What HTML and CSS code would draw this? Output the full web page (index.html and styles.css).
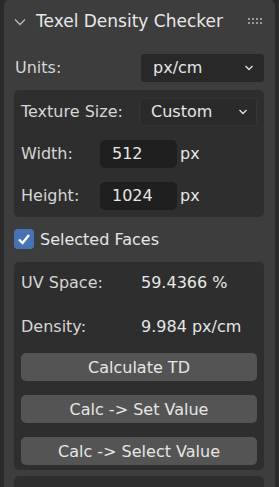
FILE: index.html
```html
<!DOCTYPE html>
<html lang="en">
<head>
<meta charset="UTF-8">
<title>Texel Density Checker</title>
<link rel="stylesheet" href="styles.css">
</head>
<body>
<div class="panel">
    <div class="header">
        <svg class="chevron" width="12" height="8" viewBox="0 0 12 8"><path d="M1 1.5 L6 6.5 L11 1.5" fill="none" stroke="#b8b8b8" stroke-width="1.4"/></svg>
        <span class="title">Texel Density Checker</span>
        <span class="grip"><i></i><i></i><i></i><i></i><i></i><i></i><i></i><i></i></span>
    </div>
    <div class="row units-row">
        <span class="label">Units:</span>
        <div class="dropdown units">px/cm<svg width="10" height="6" viewBox="0 0 10 6"><path d="M1.5 1 L5 4.5 L8.5 1" fill="none" stroke="#ddd" stroke-width="1.4"/></svg></div>
    </div>
    <div class="box size-box">
        <div class="row">
            <span class="label size-label">Texture Size:</span>
            <div class="dropdown custom">Custom<svg width="10" height="6" viewBox="0 0 10 6"><path d="M1.5 1 L5 4.5 L8.5 1" fill="none" stroke="#ddd" stroke-width="1.4"/></svg></div>
        </div>
        <div class="row">
            <span class="label dim-label">Width:</span>
            <div class="field">512</div>
            <span class="unit">px</span>
        </div>
        <div class="row">
            <span class="label dim-label">Height:</span>
            <div class="field">1024</div>
            <span class="unit">px</span>
        </div>
    </div>
    <div class="check-row">
        <span class="checkbox"><svg width="14" height="12" viewBox="0 0 14 12"><path d="M2 6.5 L5.5 10 L12 2" fill="none" stroke="#fff" stroke-width="2.4"/></svg></span>
        <span>Selected Faces</span>
    </div>
    <div class="box result-box">
        <div class="stat"><span class="stat-label">UV Space:</span><span>59.4366 %</span></div>
        <div class="stat"><span class="stat-label">Density:</span><span>9.984 px/cm</span></div>
        <button class="btn">Calculate TD</button>
        <button class="btn">Calc -&gt; Set Value</button>
        <button class="btn">Calc -&gt; Select Value</button>
    </div>
    <div class="box next-box"></div>
</div>
</body>
</html>
```

FILE: styles.css
```css
body {
    margin: 0;
    background-color: #2a2a2a;
    font-family: "DejaVu Sans", sans-serif;
    font-size: 16px;
    color: #e6e6e6;
    height: 487px;
    overflow: hidden;
}
.panel {
    margin: 0 4px;
    height: 520px;
    background-color: #3d3d3d;
    border-radius: 5px;
    padding: 0 11px 0 10px;
}
.header {
    height: 42px;
    display: flex;
    align-items: center;
}
.chevron {
    margin: 0 10px 0 0;
    position: relative;
    top: 1px;
}
.title {
    font-size: 17px;
    color: #e8e8e8;
    flex: 1;
}
.grip {
    display: grid;
    grid-template-columns: repeat(4, 2px);
    grid-auto-rows: 2px;
    gap: 2px;
    margin-right: 2px;
}
.grip i {
    background-color: #9a9a9a;
}
.row {
    display: flex;
    align-items: center;
    height: 29px;
}
.units-row {
    margin-top: 11px;
}
.label {
    color: #d6d6d6;
}
.units-row .label {
    width: 126px;
    padding-left: 1px;
}
.dropdown {
    display: flex;
    align-items: center;
    justify-content: space-between;
    height: 28px;
    border-radius: 4px;
    background-color: #282828;
    box-sizing: border-box;
}
.units {
    flex: 1;
    padding: 0 10px 0 12px;
}
.box {
    background-color: #2e2e2e;
    border-radius: 5px;
}
.size-box {
    margin-top: 8px;
    padding: 7px;
    display: flex;
    flex-direction: column;
    gap: 13px;
}
.size-label {
    width: 118px;
}
.custom {
    flex: 1;
    padding: 0 8px 0 11px;
    background-color: #2a2a2a;
    border: 1px solid #363636;
}
.dim-label {
    width: 79px;
}
.field {
    width: 77px;
    height: 28px;
    line-height: 28px;
    box-sizing: border-box;
    padding-left: 12px;
    background-color: #1f1f1f;
    border-radius: 5px;
}
.unit {
    margin-left: 3px;
}
.check-row {
    display: flex;
    align-items: center;
    height: 22px;
    margin-top: 11px;
    gap: 6px;
}
.checkbox {
    width: 20px;
    height: 20px;
    border-radius: 4px;
    background-color: #4772b3;
    display: flex;
    align-items: center;
    justify-content: center;
}
.result-box {
    margin-top: 12px;
    padding: 6px 7px 5px 7px;
    display: flex;
    flex-direction: column;
}
.stat {
    display: flex;
    align-items: center;
    height: 29px;
    margin-bottom: 15px;
}
.stat-label {
    width: 120px;
    color: #d6d6d6;
}
.stat + .stat {
    margin-bottom: 12px;
}
.btn {
    font-family: "DejaVu Sans", sans-serif;
    font-size: 16px;
    color: #e6e6e6;
    background-color: #545454;
    border: none;
    border-radius: 5px;
    height: 28px;
    margin-bottom: 14px;
    padding: 0;
}
.btn:last-child {
    margin-bottom: 0;
}
.next-box {
    margin-top: 6px;
    height: 40px;
}
```
